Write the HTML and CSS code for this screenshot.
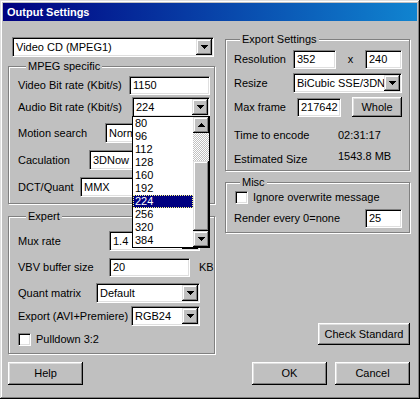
FILE: index.html
```html
<!DOCTYPE html>
<html lang="en">
<head>
<meta charset="utf-8">
<title>Output Settings</title>
<link rel="stylesheet" href="styles.css">
</head>
<body>
<div class="window">
  <div class="titlebar">Output Settings</div>
  <div class="client">
    <div class="upper">
      <div class="col col-left">
        <div class="combo combo-main"><span class="combo-text">Video CD (MPEG1)</span><span class="arrow-btn"><svg class="arr" width="7" height="4" viewBox="0 0 7 4"><path d="M0 0h7v1H0zM1 1h5v1H1zM2 2h3v1H2zM3 3h1v1H3z"/></svg></span></div>

        <fieldset class="group group-mpeg">
          <legend>MPEG specific</legend>
          <div class="row row-vbr"><span class="label">Video Bit rate (Kbit/s)</span><span class="field w-vbr">1150</span></div>
          <div class="row row-abr"><span class="label">Audio Bit rate (Kbit/s)</span>
            <div class="combo w-abr"><span class="combo-text">224</span><span class="arrow-btn"><svg class="arr" width="7" height="4" viewBox="0 0 7 4"><path d="M0 0h7v1H0zM1 1h5v1H1zM2 2h3v1H2zM3 3h1v1H3z"/></svg></span>
              <div class="listbox">
                <ul class="list-items">
                  <li>80</li><li>96</li><li>112</li><li>128</li><li>160</li><li>192</li><li class="selected">224</li><li>256</li><li>320</li><li>384</li>
                </ul>
                <div class="scrollbar">
                  <span class="sb-btn"><svg class="arr" width="7" height="4" viewBox="0 0 7 4"><path d="M3 0h1v1H3zM2 1h3v1H2zM1 2h5v1H1zM0 3h7v1H0z"/></svg></span>
                  <span class="sb-track"></span>
                  <span class="sb-thumb"></span>
                  <span class="sb-btn"><svg class="arr" width="7" height="4" viewBox="0 0 7 4"><path d="M0 0h7v1H0zM1 1h5v1H1zM2 2h3v1H2zM3 3h1v1H3z"/></svg></span>
                </div>
              </div>
            </div>
          </div>
          <div class="row row-motion"><span class="label">Motion search</span><div class="combo w-motion"><span class="combo-text">Normal</span><span class="arrow-btn"><svg class="arr" width="7" height="4" viewBox="0 0 7 4"><path d="M0 0h7v1H0zM1 1h5v1H1zM2 2h3v1H2zM3 3h1v1H3z"/></svg></span></div></div>
          <div class="row row-calc"><span class="label">Caculation</span><div class="combo w-calc"><span class="combo-text">3DNow</span><span class="arrow-btn"><svg class="arr" width="7" height="4" viewBox="0 0 7 4"><path d="M0 0h7v1H0zM1 1h5v1H1zM2 2h3v1H2zM3 3h1v1H3z"/></svg></span></div></div>
          <div class="row row-dct"><span class="label">DCT/Quant</span><div class="combo w-dct"><span class="combo-text">MMX</span><span class="arrow-btn"><svg class="arr" width="7" height="4" viewBox="0 0 7 4"><path d="M0 0h7v1H0zM1 1h5v1H1zM2 2h3v1H2zM3 3h1v1H3z"/></svg></span></div></div>
        </fieldset>

        <fieldset class="group group-expert">
          <legend>Expert</legend>
          <div class="row row-mux"><span class="label">Mux rate</span><div class="combo w-mux"><span class="combo-text">1.4</span><span class="arrow-btn"><svg class="arr" width="7" height="4" viewBox="0 0 7 4"><path d="M0 0h7v1H0zM1 1h5v1H1zM2 2h3v1H2zM3 3h1v1H3z"/></svg></span></div></div>
          <div class="row row-vbv"><span class="label">VBV buffer size</span><span class="field w-vbv">20</span><span class="unit">KB</span></div>
          <div class="row row-quant"><span class="label">Quant matrix</span><div class="combo w-quant"><span class="combo-text">Default</span><span class="arrow-btn"><svg class="arr" width="7" height="4" viewBox="0 0 7 4"><path d="M0 0h7v1H0zM1 1h5v1H1zM2 2h3v1H2zM3 3h1v1H3z"/></svg></span></div></div>
          <div class="row row-export"><span class="label">Export (AVI+Premiere)</span><div class="combo w-export"><span class="combo-text">RGB24</span><span class="arrow-btn"><svg class="arr" width="7" height="4" viewBox="0 0 7 4"><path d="M0 0h7v1H0zM1 1h5v1H1zM2 2h3v1H2zM3 3h1v1H3z"/></svg></span></div></div>
          <div class="row row-pulldown"><span class="checkbox"></span><span class="check-label">Pulldown 3:2</span></div>
        </fieldset>
      </div>

      <div class="col col-right">
        <fieldset class="group group-export">
          <legend>Export Settings</legend>
          <div class="row row-res"><span class="label">Resolution</span><span class="field w-resx">352</span><span class="times">x</span><span class="field w-resy">240</span></div>
          <div class="row row-resize"><span class="label">Resize</span><div class="combo w-resize"><span class="combo-text">BiCubic SSE/3DNow</span><span class="arrow-btn"><svg class="arr" width="7" height="4" viewBox="0 0 7 4"><path d="M0 0h7v1H0zM1 1h5v1H1zM2 2h3v1H2zM3 3h1v1H3z"/></svg></span></div></div>
          <div class="row row-max"><span class="label">Max frame</span><span class="field w-max">217642</span><span class="btn btn-whole">Whole</span></div>
          <div class="row row-time"><span class="label info-label">Time to encode</span><span class="info-value">02:31:17</span></div>
          <div class="row row-est"><span class="label info-label est-label">Estimated Size</span><span class="info-value">1543.8 MB</span></div>
        </fieldset>

        <fieldset class="group group-misc">
          <legend>Misc</legend>
          <div class="row row-ignore"><span class="checkbox cb-misc"></span><span class="check-label">Ignore overwrite message</span></div>
          <div class="row row-render"><span class="label">Render every 0=none</span><span class="field w-render">25</span></div>
        </fieldset>

        <span class="btn btn-check">Check Standard</span>
      </div>
    </div>

    <div class="footer">
      <span class="btn btn-dlg">Help</span>
      <div class="footer-right">
        <span class="btn btn-dlg">OK</span>
        <span class="btn btn-dlg">Cancel</span>
      </div>
    </div>
  </div>
</div>
</body>
</html>
```

FILE: styles.css
```css
* { box-sizing: border-box; }

html, body {
  margin: 0;
  padding: 0;
}

body {
  width: 420px;
  height: 399px;
  overflow: hidden;
  background: #c0c0c0;
  font-family: "Liberation Sans", Arial, sans-serif;
  font-size: 11px;
  line-height: 13px;
  color: #000;
}

.window {
  width: 420px;
  height: 399px;
  padding: 3px;
  background: #c0c0c0;
  display: flex;
  flex-direction: column;
  box-shadow: inset -1px -1px 0 #000, inset 1px 1px 0 #dfdfdf,
              inset -2px -2px 0 #808080, inset 2px 2px 0 #fff;
}

.titlebar {
  flex: 0 0 18px;
  padding-left: 4px;
  background: linear-gradient(90deg, #000080, #1084d0);
  color: #fff;
  font-weight: bold;
  line-height: 18px;
}

.client {
  flex: 1;
  display: flex;
  flex-direction: column;
  padding: 0 7px 0 5px;
}

.upper {
  display: grid;
  grid-template-columns: 208px 185px;
  column-gap: 9px;
}

.col {
  display: flex;
  flex-direction: column;
  align-items: flex-start;
}

.col-left { padding-top: 16px; }
.col-right { padding-top: 12px; }

/* group boxes */
.group {
  margin: 0;
  padding: 0;
  min-width: 0;
  border: 1px solid #808080;
  box-shadow: 1px 1px 0 #fff, inset 1px 1px 0 #fff;
}

.group legend {
  height: 13px;
  line-height: 13px;
  padding: 0 2px;
  margin-left: 8px;
  background: #c0c0c0;
}

.group-mpeg {
  width: 207px;
  margin-top: 3px;
  padding: 0 4px 6px 9px;
}

.group-expert {
  width: 207px;
  margin-top: 6px;
  padding: 0 14px 7px 9px;
}

.group-export {
  width: 185px;
  padding: 0 7px 4px 8px;
}

.group-misc {
  width: 185px;
  margin-top: 5px;
  padding: 0 7px 4px 8px;
}

.group-export legend,
.group-misc legend { margin-left: 6px; }

/* rows */
.row {
  display: flex;
  align-items: center;
  width: 100%;
}

.label { white-space: nowrap; }

.row-vbr { margin-top: 3px; }
.row-abr { margin-top: 2px; }
.row-motion { margin-top: 6px; }
.row-calc { margin-top: 7px; }
.row-dct { margin-top: 7px; }

.row-mux { margin-top: 8px; }
.row-vbv { margin-top: 7px; }
.row-quant { margin-top: 6px; }
.row-export { margin-top: 3px; }
.row-pulldown { margin-top: 7px; }

.row-res { margin-top: 4px; }
.row-resize { margin-top: 4px; }
.row-max { margin-top: 4px; }
.row-time { margin-top: 12px; }
.row-est { margin-top: 8px; align-items: flex-start; }

.row-ignore { margin-top: 2px; }
.row-render { margin-top: 5px; }

/* edit fields */
.field {
  height: 19px;
  margin-left: auto;
  padding-left: 3px;
  line-height: 17px;
  background: #fff;
  white-space: nowrap;
  overflow: hidden;
  border: 1px solid;
  border-color: #808080 #fff #fff #808080;
  box-shadow: inset 1px 1px 0 #000, inset -1px -1px 0 #dfdfdf;
}

.w-vbr { width: 81px; }
.w-vbv { width: 81px; }
.w-resx { width: 43px; }
.w-resy { width: 37px; margin-left: 0; }
.w-max { width: 44px; }
.w-render { width: 37px; }

.unit {
  width: 12px;
  margin-left: 9px;
  margin-right: -11px;
}

.times {
  width: 29px;
  text-align: center;
}

/* combo boxes */
.combo {
  position: relative;
  display: flex;
  height: 20px;
  margin-left: auto;
  background: #fff;
  border: 1px solid;
  border-color: #808080 #fff #fff #808080;
  box-shadow: inset 1px 1px 0 #000, inset -1px -1px 0 #dfdfdf;
}

.combo-text {
  flex: 1;
  min-width: 0;
  padding-left: 3px;
  line-height: 18px;
  white-space: nowrap;
  overflow: hidden;
}

.arrow-btn,
.sb-btn {
  flex: 0 0 16px;
  width: 16px;
  height: 16px;
  display: flex;
  align-items: center;
  justify-content: center;
  background: #c0c0c0;
  box-shadow: inset -1px -1px 0 #000, inset 1px 1px 0 #dfdfdf,
              inset -2px -2px 0 #808080, inset 2px 2px 0 #fff;
}

.arrow-btn { margin: 1px 1px 1px 0; }

.arr {
  display: block;
  shape-rendering: crispEdges;
  fill: #000;
}

.combo-main {
  width: 202px;
  margin-left: 4px;
}

.w-abr { width: 78px; }
.w-motion { width: 105px; }
.w-calc { width: 121px; }
.w-dct { width: 130px; }
.w-mux { width: 91px; }
.w-quant { width: 104px; }
.w-export { width: 69px; }
.w-resize { width: 109px; }

/* open dropdown list */
.listbox {
  position: absolute;
  top: 100%;
  left: -1px;
  z-index: 2;
  width: 78px;
  height: 132px;
  display: flex;
  background: #fff;
  border: 1px solid #000;
}

.list-items {
  flex: 1;
  margin: 0;
  padding: 0;
  list-style: none;
}

.list-items li {
  height: 13px;
  line-height: 13px;
  padding-left: 2px;
}

.list-items .selected {
  background: #000080;
  color: #fff;
  outline: 1px dotted #ffff80;
  outline-offset: -1px;
}

.scrollbar {
  flex: 0 0 16px;
  display: flex;
  flex-direction: column;
}

.sb-track {
  flex: 0 0 28px;
  background: repeating-conic-gradient(#c0c0c0 0 25%, #fff 0 50%) 0 0 / 2px 2px;
}

.sb-thumb {
  flex: 1;
  background: #c0c0c0;
  box-shadow: inset -1px -1px 0 #000, inset 1px 1px 0 #dfdfdf,
              inset -2px -2px 0 #808080, inset 2px 2px 0 #fff;
}

/* checkboxes */
.checkbox {
  flex: 0 0 13px;
  width: 13px;
  height: 13px;
  background: #fff;
  border: 1px solid;
  border-color: #808080 #fff #fff #808080;
  box-shadow: inset 1px 1px 0 #000, inset -1px -1px 0 #dfdfdf;
}

.cb-misc { margin-left: 1px; }

.check-label {
  margin-left: 5px;
  white-space: nowrap;
}

/* info rows */
.info-label { width: 104px; }
.est-label { padding-top: 3px; }
.info-value { white-space: nowrap; }

/* buttons */
.btn {
  display: flex;
  align-items: center;
  justify-content: center;
  background: #c0c0c0;
  white-space: nowrap;
  box-shadow: inset -1px -1px 0 #000, inset 1px 1px 0 #fff,
              inset -2px -2px 0 #808080, inset 2px 2px 0 #dfdfdf;
}

.btn-whole {
  width: 50px;
  height: 20px;
  margin-left: 11px;
}

.btn-check {
  align-self: flex-end;
  width: 92px;
  height: 22px;
  margin-top: auto;
  margin-bottom: 9px;
}

.footer {
  display: flex;
  margin-top: 8px;
}

.footer-right {
  display: flex;
  gap: 8px;
  margin-left: auto;
}

.btn-dlg {
  width: 75px;
  height: 23px;
}
```
